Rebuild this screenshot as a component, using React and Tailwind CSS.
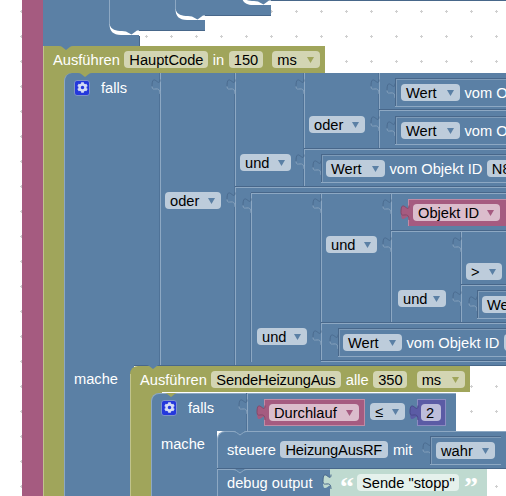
import React from "react";
import { FaCog } from "react-icons/fa";

const BLUE = "#5b80a5", DARK = "#4c6c90", LIGHT = "#84a0bc";

function Box({ x, y, w, h, className = "" }) {
  return <div className={"absolute " + className} style={{ left: x, top: y, width: w, height: h }} />;
}

function V({ x, y, h }) {
  return (
    <>
      <Box x={x - 1} y={y} w={1} h={h} className="bg-[#4f7297]" />
      <Box x={x} y={y} w={1} h={h} className="bg-[#8da8c3]" />
    </>
  );
}

function H({ x, y, w }) {
  return (
    <>
      <Box x={x} y={y - 1} w={w} h={1} className="bg-[#48678a]" />
      <Box x={x} y={y} w={w} h={1} className="bg-[#8da8c3]" />
    </>
  );
}

function Tab({ x, y, fill = BLUE, stroke = DARK, lower = LIGHT }) {
  return (
    <svg className="absolute" style={{ left: x - 9, top: y }} width="10" height="16" viewBox="0 0 10 16">
      <path d="M9,0 C9,10 1,-8 1,7.5 S9,5 9,15 Z" fill={fill} />
      <path d="M9,0.5 C9,10 1,-8 1,7.5" fill="none" stroke={stroke} strokeWidth="1" />
      <path d="M1,7.5 C1,14 9,5 9,15" fill="none" stroke={lower} strokeWidth="1" />
    </svg>
  );
}

function Notch({ x, y, fill = BLUE, stroke }) {
  return (
    <svg className="absolute" style={{ left: x, top: y }} width="20" height="6" viewBox="0 0 20 6">
      <path d="M0,0 L3,0 C6,0 7,2 10,4 C13,2 14,0 17,0 L20,0 Z" fill={fill} />
      {stroke && <path d="M0,0.5 L3,0.5 C6,0.5 7,2 10,4 C13,2 14,0.5 17,0.5 L20,0.5" fill="none" stroke={stroke} />}
    </svg>
  );
}

const tones = {
  blue: { bg: "bg-[#bdccdb]", arrow: "#5b80a5" },
  olive: { bg: "bg-[#d3d5b3]", arrow: "#a0a55b" },
  pink: { bg: "bg-[#dbbdcc]", arrow: "#a55b80" },
  purple: { bg: "bg-[#bdbddb]", arrow: "#5b5ba5" },
  teal: { bg: "bg-[#e5f1ec]", arrow: "#5ba58c" },
};

function Field({ t, tone = "blue", arrow = false, w, className = "" }) {
  const c = tones[tone];
  return (
    <div
      className={"shrink-0 flex items-start h-[17px] rounded-[4px] text-black leading-[19px] px-[5px] whitespace-nowrap overflow-hidden " + c.bg + " " + className}
      style={w ? { width: w } : undefined}
    >
      {t}
      {arrow && (
        <svg className="shrink-0 ml-auto mt-[6px] mr-[1px]" width="7" height="6" viewBox="0 0 7 6">
          <path d="M0,0 H7 L3.5,6 Z" fill={c.arrow} />
        </svg>
      )}
    </div>
  );
}

function Text({ t }) {
  return <div className="shrink-0 h-[17px] leading-[19px] text-white whitespace-nowrap">{t}</div>;
}

function Row({ x, y, className = "gap-[4.5px]", children }) {
  return (
    <div className={"absolute flex items-center h-[17px] " + className} style={{ left: x, top: y }}>
      {children}
    </div>
  );
}

function Chip({ x, y, ...rest }) {
  return (
    <Row x={x} y={y}>
      <Field {...rest} />
    </Row>
  );
}

function ValueBox({ x, y, w, h = 28 }) {
  return (
    <div
      className="absolute border-t border-l border-[#48678a] shadow-[inset_1px_1px_0_#7e9bb8,0_1px_0_#8da8c3]"
      style={{ left: x, top: y, width: w, height: h }}
    />
  );
}

function Gear() {
  return (
    <div className="shrink-0 w-[16px] h-[16px] rounded-[3px] bg-[#2438dc] border border-[#7e93c8] flex items-center justify-center">
      <FaCog className="text-[#d5dcf5]" size={11} />
    </div>
  );
}

function Sliver({ dx, dy }) {
  return (
    <path
      transform={`translate(${dx} ${dy})`}
      d="M109.5,24 C109.5,31 113,35 121,35 L139,35 L139,30.5 L137,30.5 L131.5,34.5 L126,31.5 L122,31 C116,31 111,30 109.5,24 Z"
      fill="#ffffff"
    />
  );
}

function ValueRow({ x, y, extra }) {
  return (
    <Row x={x} y={y} className="gap-[4.5px]">
      <Field t="Wert" arrow w={59} />
      <Text t="vom Objekt ID" />
      {extra}
    </Row>
  );
}

export default function App() {
  return (
    <div className="relative w-[506px] h-[496px] overflow-hidden bg-white font-['Liberation_Sans',Arial,sans-serif] text-[14.67px]">
      {/* workspace grid */}
      <svg className="absolute inset-0" width="506" height="496">
        <defs>
          <pattern id="grid" x="20" y="10" width="25" height="25" patternUnits="userSpaceOnUse">
            <rect x="0" y="1" width="3" height="1" fill="#cfcfcf" />
            <rect x="1" y="0" width="1" height="3" fill="#cfcfcf" />
          </pattern>
        </defs>
        <rect width="506" height="496" fill="url(#grid)" />
      </svg>

      {/* blocks stacked above */}
      <Box x={43} y={0} w={96} h={46} className="bg-[#5b80a5]" />
      <Box x={139} y={0} w={66} h={31} className="bg-[#5b80a5] border-b border-[#48678a]" />
      <Box x={205} y={0} w={66} h={16} className="bg-[#5b80a5] border-b border-[#48678a]" />
      <Box x={271} y={0} w={235} h={1} className="bg-[#48678a]" />
      <Box x={139} y={36} w={1} h={10} className="bg-[#48678a]" />
      <Box x={109} y={0} w={1} h={25} className="bg-[#8da8c3]" />
      <Box x={175} y={0} w={1} h={10} className="bg-[#8da8c3]" />
      <svg className="absolute left-0 top-0" width="506" height="50">
        <Sliver dx={0} dy={0} />
        <Sliver dx={66} dy={-15} />
        <Sliver dx={132} dy={-30} />
      </svg>

      {/* pink outer spine */}
      <Box x={22} y={0} w={21} h={496} className="bg-[#a55b80]" />

      {/* Ausführen HauptCode */}
      <Box x={43} y={46} w={282} h={27} className="bg-[#a0a55b]" />
      <Box x={43} y={46} w={32} h={450} className="bg-[#a0a55b] border-l border-[#c0c38d]" />
      <Notch x={56} y={46} />
      <Row x={53} y={51}>
        <Text t="Ausführen" />
        <Field t="HauptCode" tone="olive" w={84} />
        <Text t="in" />
        <Field t="150" tone="olive" w={34} />
        <div className="ml-[5px]">
          <Field t="ms" tone="olive" arrow w={48} />
        </div>
      </Row>

      {/* falls */}
      <Box x={64} y={73} w={442} h={293} className="bg-[#5b80a5] rounded-tl-[8px] border-l border-[#8da8c3]" />
      <Box x={64} y={360} w={70} h={136} className="bg-[#5b80a5] border-l border-[#8da8c3]" />
      <Box x={134} y={365} w={372} h={1} className="bg-[#48678a]" />
      <Notch x={75} y={73} fill="#a0a55b" />
      <Row x={74} y={79} className="gap-[11px]">
        <Gear />
        <Text t="falls" />
      </Row>
      <Row x={74} y={370}>
        <Text t="mache" />
      </Row>

      {[
        [160, 73, 292],
        [235, 73, 292],
        [304, 73, 114],
        [379, 73, 76],
        [251, 193, 169],
        [321, 193, 168],
        [391, 193, 130],
        [461, 231, 92],
      ].map(([x, y, h]) => (
        <V key={x} x={x} y={y} h={h} />
      ))}
      {[
        [379, 110, 127],
        [304, 149, 202],
        [235, 187, 271],
        [251, 193, 255],
        [391, 231, 115],
        [461, 285, 45],
        [321, 323, 185],
        [321, 361, 185],
      ].map(([x, y, w]) => (
        <H key={x + "-" + y} x={x} y={y} w={w} />
      ))}

      {[
        [160, 79],
        [235, 79],
        [304, 79],
        [379, 79],
        [379, 116],
        [235, 192],
        [304, 154],
        [395, 83],
        [395, 121],
        [251, 198],
        [321, 160],
        [321, 198],
        [391, 199],
        [391, 237],
        [321, 330],
        [338, 334],
        [461, 237],
        [461, 291],
        [477, 296],
      ].map(([x, y]) => (
        <Tab key={x + "-" + y} x={x} y={y} />
      ))}

      {/* value blocks */}
      <ValueBox x={395} y={78} w={111} />
      <ValueBox x={395} y={116} w={111} />
      <ValueBox x={321} y={154} w={185} />
      <ValueBox x={338} y={328} w={168} />
      <ValueBox x={477} y={290} w={29} />

      <ValueRow x={401} y={84} />
      <ValueRow x={401} y={122} />
      <ValueRow x={326} y={160} extra={<Field t="N8" w={30} />} />
      <ValueRow x={343} y={334} extra={<Field t="" w={30} />} />
      <Chip x={482} y={296} t="Wert" w={40} />

      <Chip x={165} y={192} t="oder" arrow w={56} />
      <Chip x={240} y={154} t="und" arrow w={51} />
      <Chip x={309} y={116} t="oder" arrow w={56} />
      <Chip x={326} y={236} t="und" arrow w={51} />
      <Chip x={398} y={290} t="und" arrow w={48} />
      <Chip x={257} y={328} t="und" arrow w={50} />
      <Chip x={466} y={263} t=">" arrow w={36} />

      {/* Objekt ID */}
      <Box x={408} y={199} w={98} h={27} className="bg-[#a55b80] border-t border-l border-[#c08ba5]" />
      <Tab x={409} y={205} fill="#a55b80" stroke="#844969" lower="#844969" />
      <Chip x={413} y={204} t="Objekt ID" tone="pink" arrow w={87} />

      {/* Ausführen SendeHeizungAus */}
      <Box x={130} y={366} w={340} h={26} className="bg-[#a0a55b] rounded-tl-[8px]" />
      <Box x={130} y={374} w={32} h={122} className="bg-[#a0a55b] border-l border-[#c0c38d]" />
      <Notch x={143} y={365} />
      <Row x={140} y={371}>
        <Text t="Ausführen" />
        <Field t="SendeHeizungAus" tone="olive" w={130} className="tracking-[-0.15px]" />
        <Text t="alle" />
        <Field t="350" tone="olive" w={34} />
        <div className="ml-[5px]">
          <Field t="ms" tone="olive" arrow w={48} />
        </div>
      </Row>

      {/* falls Durchlauf */}
      <Box x={151} y={393} w={305} h={38} className="bg-[#5b80a5] rounded-tl-[8px] border-l border-t border-[#8da8c3]" />
      <Box x={151} y={425} w={66} h={71} className="bg-[#5b80a5] border-l border-[#8da8c3]" />
      <Notch x={161} y={393} fill="#a0a55b" />
      <Row x={161} y={399} className="gap-[11px]">
        <Gear />
        <Text t="falls" />
      </Row>
      <Row x={161} y={435}>
        <Text t="mache" />
      </Row>
      <V x={247} y={393} h={38} />
      <Tab x={247} y={399} />

      <Box x={264} y={399} w={101} h={27} className="bg-[#a55b80] border border-[#c08ba5]" />
      <Tab x={265} y={405} fill="#a55b80" stroke="#844969" lower="#844969" />
      <Chip x={269} y={404} t="Durchlauf" tone="pink" arrow w={90} />
      <Chip x={370} y={403} t="≤" arrow w={35} />
      <Box x={417} y={399} w={29} h={27} className="bg-[#5b5ba5] border border-[#8b8bc0]" />
      <Tab x={418} y={405} fill="#5b5ba5" stroke="#49498a" lower="#49498a" />
      <Chip x={421} y={404} t="2" tone="purple" w={20} />

      {/* steuere */}
      <Box x={217} y={431} w={289} h={38} className="bg-[#5b80a5] rounded-tl-[8px] border-t border-l border-[#8da8c3]" />
      <Box x={217} y={468} w={289} h={1} className="bg-[#48678a]" />
      <Notch x={230} y={431} stroke="#8da8c3" />
      <Row x={227} y={441}>
        <Text t="steuere" />
        <Field t="HeizungAusRF" w={108} className="tracking-[-0.15px]" />
        <Text t="mit" />
      </Row>
      <Tab x={431} y={442} />
      <ValueBox x={430} y={436} w={71} />
      <Chip x={436} y={442} t="wahr" arrow w={59} />

      {/* debug output */}
      <Box x={217} y={469} w={113} h={27} className="bg-[#5b80a5] border-t border-l border-[#8da8c3]" />
      <Notch x={230} y={469} stroke="#8da8c3" />
      <Row x={227} y={474}>
        <Text t="debug output" />
      </Row>
      <Box x={330} y={469} w={157} h={27} className="bg-[#bfdad0]" />
      <Tab x={331} y={474} fill="#bfdad0" stroke="#48678a" lower="#48678a" />
      <Row x={340} y={474} className="gap-[5px]">
        <div className="w-[12px] h-[17px] text-white font-bold text-[28px] leading-[26px] font-['Liberation_Serif',serif]">“</div>
        <Field t={'Sende "stopp"'} tone="teal" w={102} />
        <div className="w-[12px] h-[17px] text-white font-bold text-[28px] leading-[26px] font-['Liberation_Serif',serif]">”</div>
      </Row>
    </div>
  );
}
